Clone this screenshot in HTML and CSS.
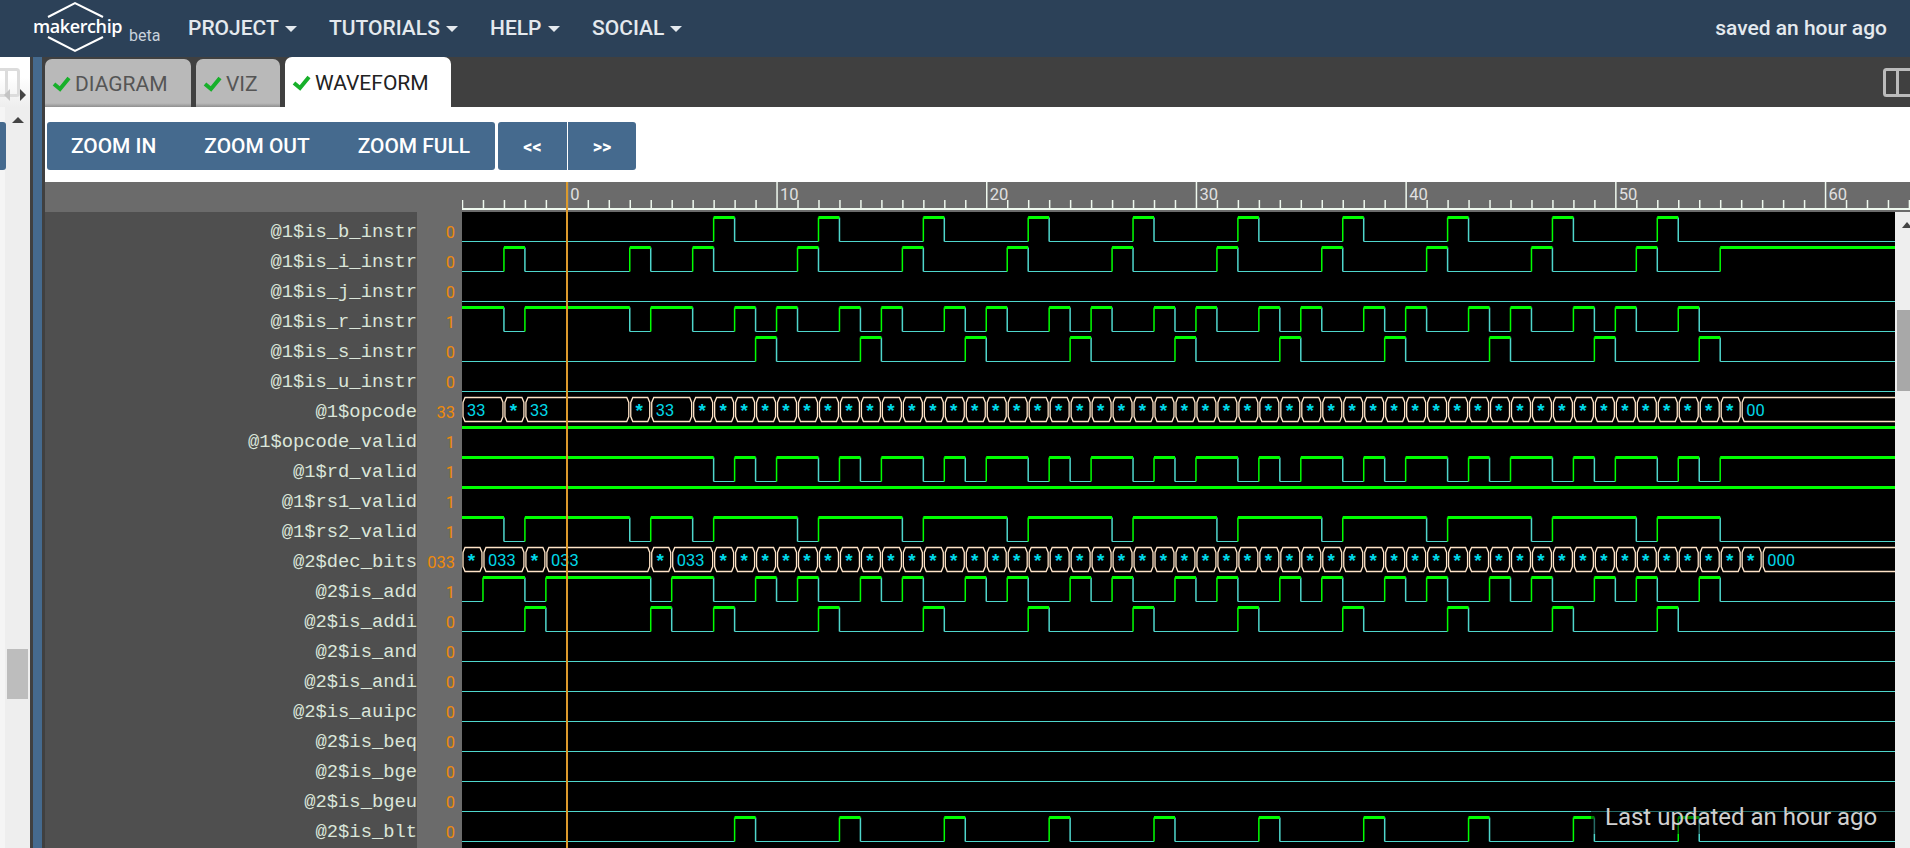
FILE: index.html
```html
<!DOCTYPE html>
<html lang="en">
<head>
    <meta charset="UTF-8">
    <meta name="viewport" content="width=device-width, initial-scale=1.0">
    <title>Makerchip</title>
    <link rel="stylesheet" href="styles.css">
</head>
<body>
    <header class="topbar">
        <svg class="logo" width="170" height="57" viewBox="0 0 170 57">
            <path class="logo-hex" d="M48 17 L75 3 L103 17 M48 37 L75 51 L103 37"/>
            <text class="logo-name" x="33" y="33">makerchip</text>
            <text class="logo-beta" x="129" y="41">beta</text>
        </svg>
        <nav class="menu">
            <span class="menu-item menu-project">PROJECT<i class="caret"></i></span>
            <span class="menu-item menu-tutorials">TUTORIALS<i class="caret"></i></span>
            <span class="menu-item menu-help">HELP<i class="caret"></i></span>
            <span class="menu-item">SOCIAL<i class="caret"></i></span>
        </nav>
        <div class="saved">saved an hour ago</div>
    </header>

    <div class="main">
        <aside class="left">
            <div class="left-top">
                <svg class="split-left" width="20" height="29" viewBox="7 0 20 29">
                    <rect x="1.5" y="1.5" width="24" height="26" rx="2"/>
                    <path d="M13.5 1.5 V27.5"/>
                </svg>
                <i class="arrow-left"></i>
                <i class="arrow-right"></i>
            </div>
            <div class="left-body">
                <div class="left-pad"></div>
                <div class="left-scroll">
                    <i class="scroll-up"></i>
                    <div class="left-thumb"></div>
                </div>
                <div class="left-button"></div>
            </div>
        </aside>
        <div class="divider"></div>

        <section class="panel">
            <div class="tabs">
                <div class="tab tab-diagram"><svg class="check" width="20" height="18" viewBox="0 0 20 18"><path d="M2 9 L8 14 L17 3"/></svg>DIAGRAM</div>
                <div class="tab tab-viz"><svg class="check" width="20" height="18" viewBox="0 0 20 18"><path d="M2 9 L8 14 L17 3"/></svg>VIZ</div>
                <div class="tab tab-active"><svg class="check" width="20" height="18" viewBox="0 0 20 18"><path d="M2 9 L8 14 L17 3"/></svg>WAVEFORM</div>
                <svg class="split-right" width="27" height="29" viewBox="0 0 27 29">
                    <rect x="1.5" y="1.5" width="30" height="26" rx="2"/>
                    <path d="M14.5 1.5 V27.5"/>
                </svg>
            </div>

            <div class="toolbar">
                <div class="btn-group zoom-group">
                    <button class="btn">ZOOM IN</button>
                    <button class="btn">ZOOM OUT</button>
                    <button class="btn">ZOOM FULL</button>
                </div>
                <div class="btn-group pager">
                    <button class="btn-page">&lt;&lt;</button>
                    <button class="btn-page">&gt;&gt;</button>
                </div>
            </div>

            <div class="wave">
                <div class="wave-head">
                    <div class="head-spacer"></div>
                    <svg id="ruler" class="ruler" width="1448" height="30"></svg>
                </div>
                <div class="wave-body">
                    <div id="names" class="names"></div>
                    <div id="vals" class="vals"></div>
                    <svg id="plot" class="plot" width="1433" height="636"></svg>
                    <div class="wave-scroll">
                        <i class="scroll-up"></i>
                        <div class="wave-thumb"></div>
                    </div>
                </div>
                <div class="cursor"></div>
                <div class="toast">Last updated an hour ago</div>
            </div>
        </section>
    </div>

    <script src="wave.js"></script>
</body>
</html>
```

FILE: styles.css
```css
* {
    box-sizing: border-box;
}
body {
    margin: 0;
    height: 848px;
    overflow: hidden;
    font-family: Roboto, sans-serif;
    background: #404040;
}

/* top bar */
.topbar {
    display: flex;
    align-items: center;
    height: 57px;
    background: #2c4158;
    color: #e4e9ee;
}
.logo {
    flex: none;
    margin-right: 18px;
}
.logo-hex {
    fill: none;
    stroke: #fff;
    stroke-width: 2;
}
.logo-name {
    font-family: "Open Sans", sans-serif;
    font-size: 18px;
    font-weight: 600;
    fill: #fff;
    letter-spacing: -0.4px;
}
.logo-beta {
    font-size: 16px;
    fill: #c8d2dc;
}
.menu {
    display: flex;
    margin-bottom: 2px;
}
.menu-item {
    display: flex;
    align-items: center;
    font-size: 21px;
    font-weight: 500;
}
.menu-project { width: 141px; }
.menu-tutorials { width: 161px; }
.menu-help { width: 102px; }
.caret {
    width: 0;
    height: 0;
    margin: 2px 0 0 6px;
    border-left: 6px solid transparent;
    border-right: 6px solid transparent;
    border-top: 6px solid #e4e9ee;
}
.saved {
    margin: 0 23px 2px auto;
    font-size: 21px;
    font-weight: 500;
}

.main {
    display: flex;
    height: 791px;
}

/* left pane */
.left {
    position: relative;
    width: 30px;
    background: #fff;
    border-top-left-radius: 6px;
}
.left-top {
    position: relative;
    height: 50px;
    padding-top: 11px;
    background: linear-gradient(#fff 40%, #eee 100%);
}
.split-left, .split-right {
    display: block;
    fill: none;
    stroke-width: 3;
}
.split-left {
    stroke: #dcdcdc;
}
.split-right {
    position: absolute;
    top: 11px;
    right: 0;
    stroke: #bbb;
}
.arrow-left, .arrow-right {
    position: absolute;
    top: 32px;
    width: 0;
    height: 0;
    border-top: 6px solid transparent;
    border-bottom: 6px solid transparent;
}
.arrow-left {
    left: 4px;
    border-right: 6px solid #c4c4c4;
}
.arrow-right {
    left: 20px;
    border-left: 6px solid #444;
}
.left-body {
    position: relative;
    display: flex;
    height: 741px;
}
.left-pad {
    width: 5px;
    background: #f5f5f5;
}
.left-scroll {
    flex: 1;
    padding-top: 10px;
    background: #eee;
}
.scroll-up {
    display: block;
    width: 0;
    height: 0;
    margin: 0 auto;
    border-left: 6px solid transparent;
    border-right: 6px solid transparent;
    border-bottom: 6px solid #444;
}
.left-thumb {
    width: 21px;
    height: 50px;
    margin: 526px 0 0 2px;
    background: #bdbdbd;
}
.left-button {
    position: absolute;
    top: 15px;
    left: 0;
    width: 6px;
    height: 48px;
    background: #456a8e;
    border-radius: 0 3px 3px 0;
}
.divider {
    width: 15px;
    background: #456a8e;
    border-left: 3px solid #404040;
    border-right: 3px solid #404040;
}

/* tabs */
.panel {
    flex: 1;
    min-width: 0;
}
.tabs {
    position: relative;
    display: flex;
    align-items: flex-end;
    gap: 5px;
    height: 50px;
    background: #404040;
}
.tab {
    display: flex;
    align-items: center;
    height: 48px;
    padding: 2px 0 0 7px;
    font-size: 21px;
    color: #555;
    background: linear-gradient(#b9b9b9 92%, #8f8f8f 100%);
    border-radius: 7px 7px 0 0;
}
.check {
    margin-right: 3px;
    fill: none;
    stroke: #17b02a;
    stroke-width: 4;
}
.tab-diagram { width: 146px; }
.tab-viz { width: 84px; }
.tab-active {
    width: 166px;
    height: 50px;
    color: #222;
    background: #fff;
}

/* toolbar */
.toolbar {
    display: flex;
    gap: 3px;
    height: 75px;
    padding: 15px 0 0 2px;
    background: #fff;
}
.btn-group {
    display: flex;
    height: 48px;
    background: #456a8e;
    border-radius: 3px;
}
.zoom-group {
    width: 448px;
}
.btn, .btn-page {
    border: none;
    background: none;
    color: #fff;
    font-family: Roboto, sans-serif;
    font-weight: 500;
}
.btn {
    padding: 0 24px;
    font-size: 20.9px;
}
.btn-page {
    width: 69px;
    padding: 0;
    font-size: 18px;
    font-weight: 700;
}
.btn-page + .btn-page {
    border-left: 1px solid #fff;
}

/* waveform */
.wave {
    position: relative;
    height: 666px;
}
.wave-head {
    display: flex;
    height: 30px;
    background: #6b6b6b;
}
.head-spacer {
    width: 417px;
    flex: none;
}
.ruler {
    display: block;
    flex: none;
}
.ruler .tick, .ruler .major {
    stroke: #eef8ee;
    stroke-width: 1.5;
}
.ruler .base {
    stroke: #eef8ee;
    stroke-width: 2;
}
.ruler text {
    font-family: Roboto, sans-serif;
    font-size: 16.5px;
    fill: #e0e0e0;
}
.wave-body {
    display: flex;
    height: 636px;
    overflow: hidden;
}
.names {
    flex: none;
    width: 372px;
    padding-top: 5px;
    background: #4f4f4f;
    color: #dbe6da;
    font-family: "Liberation Mono", monospace;
    font-size: 18.8px;
    line-height: 30px;
    text-align: right;
}
.vals {
    flex: none;
    width: 45px;
    padding: 6px 7px 0 0;
    background: #6b6b6b;
    color: #ee8a0c;
    font-family: Roboto, sans-serif;
    font-size: 16.5px;
    line-height: 30px;
    text-align: right;
}
.plot {
    display: block;
    flex: none;
    background: #000;
}
.plot path {
    fill: none;
}
.plot .low { stroke: #4fd6cc; stroke-width: 1; }
.plot .fall { stroke: #4fd6cc; stroke-width: 1.5; }
.plot .high { stroke: #00ff00; stroke-width: 3; }
.plot .rise { stroke: #00ff00; stroke-width: 1.5; }
.plot .bus { stroke: #ffe4c8; stroke-width: 1.3; }
.plot text {
    font-family: Roboto, sans-serif;
    font-size: 16.5px;
    fill: #00d8e8;
}
.plot .star {
    font-family: "Liberation Mono", monospace;
    font-size: 19px;
    font-weight: 700;
    text-anchor: middle;
}
.wave-scroll {
    flex: 1;
    padding-top: 10px;
    background: #eee;
}
.wave-scroll .scroll-up {
    margin: 0 0 0 7px;
    border-left-width: 5px;
    border-right-width: 5px;
}
.wave-thumb {
    height: 81px;
    margin: 82px 0 0 2px;
    background: #a8a8a8;
}
.cursor {
    position: absolute;
    top: 0;
    bottom: 0;
    left: 521px;
    width: 2px;
    background: #dc9a2c;
}
.toast {
    position: absolute;
    right: 15px;
    bottom: 14px;
    width: 304px;
    height: 31px;
    padding-left: 14px;
    background: rgba(0, 0, 0, 0.5);
    color: #d0d0d0;
    font-size: 24px;
    line-height: 28px;
}
```

FILE: wave.js
```js
// Waveform viewer: rows, ruler and traces are built from the signal data below
const SVG_NS = 'http://www.w3.org/2000/svg';
const STEP = 20.97;      // px per cycle
const CYCLES = 69;
const ROW = 30;
const FIRST_LOW = 29.5;  // y of row 0's low level inside the plot
const HIGH_UP = 24;

// instruction type of each cycle
function type(k) {
    if (k < 0) return '';
    if (k >= 60) return 'i';
    if (k === 2 || k === 8) return 'i';
    if (k < 11) return 'r';
    return ['i', 'b', 'r', 's', 'r'][(k - 11) % 5];
}

function opcode(k) {
    if (k >= 61) return '00';
    if (k >= 11 || k === 2 || k === 8) return '*';
    return '33';
}

function decBits(k) {
    if (k >= 62) return '000';
    if (k < 1) return '*';
    const v = opcode(k - 1);
    return v === '33' ? '033' : v;
}

const never = () => 0;
const always = () => 1;

const signals = [
    ['@1$is_b_instr', '0', k => type(k) === 'b'],
    ['@1$is_i_instr', '0', k => type(k) === 'i'],
    ['@1$is_j_instr', '0', never],
    ['@1$is_r_instr', '1', k => type(k) === 'r'],
    ['@1$is_s_instr', '0', k => type(k) === 's'],
    ['@1$is_u_instr', '0', never],
    ['@1$opcode', '33', opcode, true],
    ['@1$opcode_valid', '1', always],
    ['@1$rd_valid', '1', k => type(k) !== 'b' && type(k) !== 's'],
    ['@1$rs1_valid', '1', always],
    ['@1$rs2_valid', '1', k => type(k) !== 'i'],
    ['@2$dec_bits', '033', decBits, true],
    ['@2$is_add', '1', k => type(k - 1) === 'r'],
    ['@2$is_addi', '0', k => k <= 60 && type(k - 1) === 'i'],
    ['@2$is_and', '0', never],
    ['@2$is_andi', '0', never],
    ['@2$is_auipc', '0', never],
    ['@2$is_beq', '0', never],
    ['@2$is_bge', '0', never],
    ['@2$is_bgeu', '0', never],
    ['@2$is_blt', '0', k => type(k - 1) === 'b'],
];

function el(parent, name, attrs, text) {
    const node = document.createElementNS(SVG_NS, name);
    for (const key in attrs) node.setAttribute(key, attrs[key]);
    if (text) node.textContent = text;
    parent.appendChild(node);
    return node;
}

function drawRuler() {
    const ruler = document.getElementById('ruler');
    for (let k = 0; k <= CYCLES; k++) {
        const x = k * STEP + 0.5;
        const major = (k - 5) % 10 === 0;
        el(ruler, 'line', { class: major ? 'major' : 'tick', x1: x, x2: x, y1: major ? 0 : 18, y2: 26 });
        if (major) {
            el(ruler, 'text', { x: x + 3, y: 18 }, String(k - 5));
        }
    }
    el(ruler, 'line', { class: 'base', x1: 0, x2: 1448, y1: 27, y2: 27 });
}

function drawBit(plot, fn, low) {
    const high = low - HIGH_UP;
    let lows = '', highs = '', rises = '', falls = '';
    let prev = fn(0) ? 1 : 0;
    let start = 0;
    for (let k = 1; k <= CYCLES + 1; k++) {
        const cur = k > CYCLES ? -1 : (fn(k) ? 1 : 0);
        if (cur === prev) continue;
        const x0 = start * STEP, x1 = Math.min(k * STEP, 1433);
        if (prev) highs += `M${x0} ${high}H${x1}`;
        else lows += `M${x0} ${low}H${x1}`;
        if (cur === 1) rises += `M${x1} ${low}V${high}`;
        if (cur === 0) falls += `M${x1} ${high}V${low}`;
        prev = cur;
        start = k;
    }
    el(plot, 'path', { class: 'low', d: lows });
    el(plot, 'path', { class: 'fall', d: falls });
    el(plot, 'path', { class: 'rise', d: rises });
    el(plot, 'path', { class: 'high', d: highs });
}

function drawBus(plot, fn, low) {
    const top = low - HIGH_UP;
    let d = '';
    let start = 0;
    for (let k = 1; k <= CYCLES + 1; k++) {
        const value = fn(start);
        if (k <= CYCLES && fn(k) === value && value !== '*') continue;
        const a = start * STEP, b = k * STEP;
        d += `M${a + 3} ${top}H${b - 3}L${b - 1} ${top + 5}V${low - 5}L${b - 3} ${low}H${a + 3}L${a + 1} ${low - 5}V${top + 5}Z`;
        if (value === '*') el(plot, 'text', { class: 'star', x: a + 9.5, y: low - 5 }, value);
        else el(plot, 'text', { x: a + 5, y: low - 6 }, value);
        start = k;
    }
    el(plot, 'path', { class: 'bus', d: d });
}

function build() {
    const names = document.getElementById('names');
    const vals = document.getElementById('vals');
    const plot = document.getElementById('plot');

    signals.forEach((sig, i) => {
        const name = document.createElement('div');
        name.textContent = sig[0];
        names.appendChild(name);

        const val = document.createElement('div');
        val.textContent = sig[1];
        vals.appendChild(val);

        const low = FIRST_LOW + i * ROW;
        if (sig[3]) drawBus(plot, sig[2], low);
        else drawBit(plot, sig[2], low);
    });
    drawRuler();
}

build();
```
